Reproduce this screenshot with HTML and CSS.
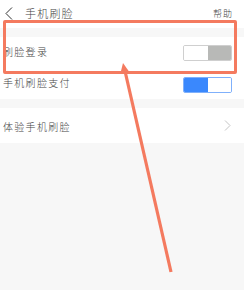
FILE: index.html
```html
<!DOCTYPE html>
<html lang="zh">
<head>
<meta charset="utf-8">
<link rel="stylesheet" href="styles.css">
</head>
<body>
<div class="page">
  <header class="topbar">
    <svg class="back" width="8" height="13" viewBox="0 0 8 13"><path d="M7 0.5 L1 6.5 L7 12.5" fill="none" stroke="#333" stroke-width="1"/></svg>
    <span class="title">手机刷脸</span>
    <span class="help">帮助</span>
  </header>
  <div class="gap"></div>
  <div class="group">
    <div class="row r1">
      <span class="label">刷脸登录</span>
      <span class="switch off"><i></i><b></b></span>
    </div>
    <div class="row r2">
      <span class="label">手机刷脸支付</span>
      <span class="switch on"><i></i><b></b></span>
    </div>
  </div>
  <div class="gap"></div>
  <div class="group">
    <div class="row r3">
      <span class="label">体验手机刷脸</span>
      <svg class="chev" width="7" height="11" viewBox="0 0 7 11"><path d="M1 0.5 L6 5.5 L1 10.5" fill="none" stroke="#c4c4c4" stroke-width="1"/></svg>
    </div>
  </div>
  <div class="highlight"></div>
  <svg class="arrow" width="244" height="290" viewBox="0 0 244 290">
    <line x1="171" y1="272" x2="125" y2="71" stroke="#f47a5f" stroke-width="3.2"/>
    <polygon points="123,63 129,71.5 120.5,73" fill="#f47a5f"/>
  </svg>
</div>
</body>
</html>
```
FILE: styles.css
```css
html, body {
  margin: 0;
  padding: 0;
  background: #f7f7f7;
}
.page {
  position: relative;
  width: 244px;
  height: 290px;
  overflow: hidden;
  font-family: "Noto Sans CJK SC", "Noto Sans", sans-serif;
  font-weight: 300;
  color: #444;
}
.topbar {
  height: 28px;
  background: #fff;
  display: flex;
  align-items: center;
  box-sizing: border-box;
  padding: 0 11px 0 5px;
}
.back {
  display: block;
  margin-top: -1px;
}
.title {
  margin-left: 12px;
  font-size: 11px;
  letter-spacing: 1.2px;
  margin-top: -2px;
}
.help {
  margin-left: auto;
  font-size: 9px;
  letter-spacing: 1px;
  margin-top: -1px;
}
.gap {
  height: 9px;
}
.group {
  background: #fff;
}
.row {
  display: flex;
  align-items: center;
  padding: 0 12px 0 3px;
}
.r1 { height: 31px; }
.r2 { height: 31px; }
.r3 { height: 35px; padding-right: 13px; }
.label {
  font-size: 10px;
  letter-spacing: 1.3px;
}
.r1 .label { margin-top: -2px; }
.r2 .label { margin-top: -2px; }
.r3 .label { margin-top: 2px; }
.switch {
  margin-left: auto;
  width: 49px;
  height: 16px;
  display: flex;
  box-sizing: border-box;
  border-radius: 2px;
  overflow: hidden;
}
.switch i, .switch b {
  flex: 1;
  display: block;
}
.switch.off {
  border: 1px solid #cfcfcf;
}
.switch.off i { background: #fff; }
.switch.off b { background: #b8b9b7; }
.switch.on {
  border: 1px solid #7fb0fb;
  margin-top: 2px;
}
.switch.on i { background: #3a88fd; }
.switch.on b { background: #fff; }
.chev {
  margin-left: auto;
  display: block;
}
.highlight {
  position: absolute;
  left: 3px;
  top: 20px;
  width: 234px;
  height: 54px;
  box-sizing: border-box;
  border: 3px solid #f47a5f;
  border-radius: 2px;
}
.arrow {
  position: absolute;
  left: 0;
  top: 0;
}
```
